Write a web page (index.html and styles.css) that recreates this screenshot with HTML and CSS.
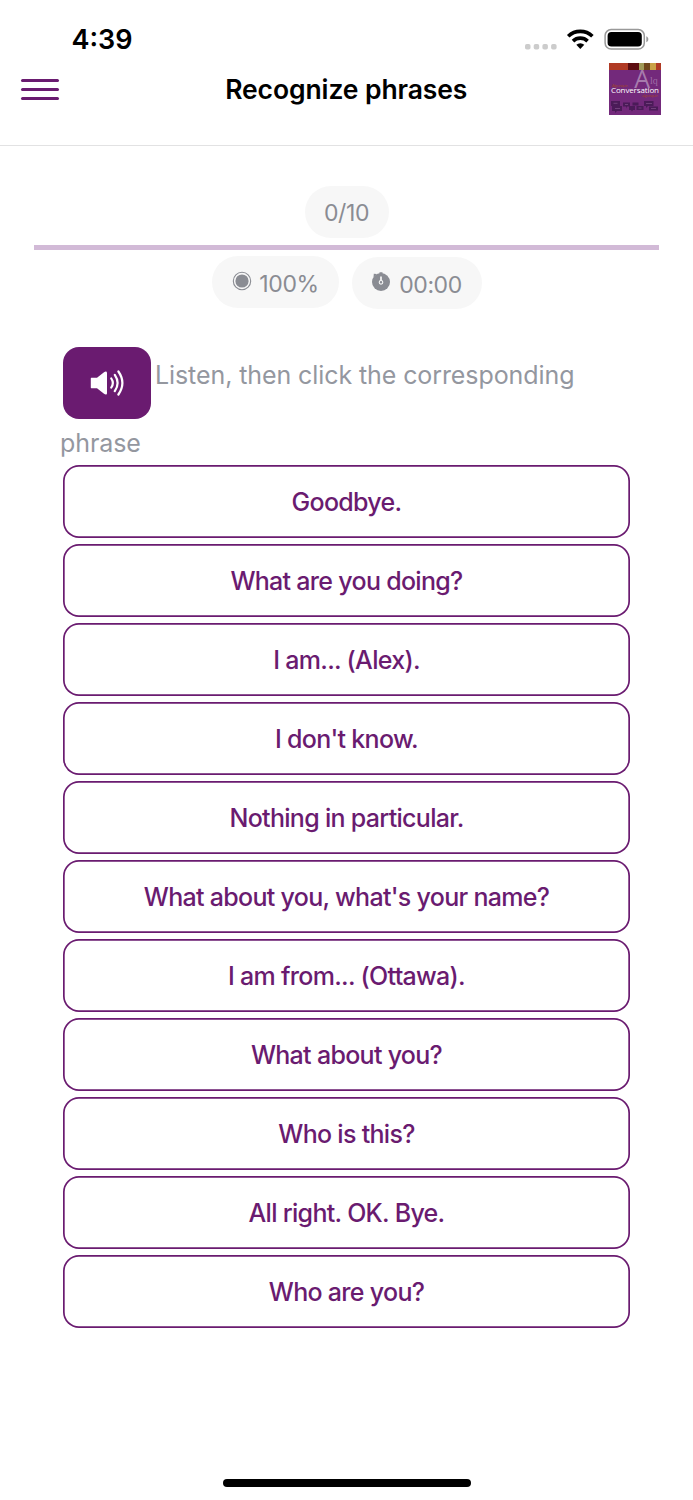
FILE: index.html
```
<!DOCTYPE html>
<html lang="en">
<head>
    <meta charset="utf-8">
    <title>Recognize phrases</title>
    <link rel="stylesheet" href="styles.css">
</head>
<body>
    <header>
        <div class="status-bar">
            <span class="clock">4:39</span>
            <svg class="status-icons" width="126" height="24" viewBox="0 0 126 24">
                <g fill="#ccc">
                    <rect x="0" y="16" width="5.5" height="5.5" rx="1.8"/>
                    <rect x="8.7" y="16" width="5.5" height="5.5" rx="1.8"/>
                    <rect x="17.4" y="16" width="5.5" height="5.5" rx="1.8"/>
                    <rect x="26.1" y="16" width="5.5" height="5.5" rx="1.8"/>
                </g>
                <g fill="none" stroke="#000" stroke-width="3.6">
                    <path d="M43.2 8.3a17.3 17.3 0 0 1 24.2 0"/>
                    <path d="M48 13.1a10.5 10.5 0 0 1 14.6 0"/>
                </g>
                <path d="M51.3 16.7a6 6 0 0 1 8 0l-4 4.2z"/>
                <rect x="80.1" y="1.6" width="39.2" height="19.4" rx="6" fill="none" stroke="#999" stroke-width="1.5"/>
                <rect x="82.6" y="4.1" width="34.2" height="14.4" rx="3.8"/>
                <path d="M121.3 8.3c2.7 1 2.7 5 0 6z" fill="#999"/>
            </svg>
        </div>
        <div class="nav-bar">
            <button class="menu" aria-label="Menu">
                <span></span>
                <span></span>
                <span></span>
            </button>
            <h1>Recognize phrases</h1>
            <svg class="logo" width="52" height="52" viewBox="0 0 52 52">
                <rect width="52" height="52" fill="#73297b"/>
                <rect width="19" height="7" fill="#b03a24"/>
                <rect x="19" width="11" height="7" fill="#5c0d10"/>
                <rect x="30" width="5" height="7" fill="#a09a58"/>
                <rect x="35" width="6" height="7" fill="#70461c"/>
                <rect x="41" width="6" height="7" fill="#c9a146"/>
                <rect x="47" width="5" height="7" fill="#b03a24"/>
                <text x="25.3" y="24.5" class="logo-letter">A</text>
                <text x="41" y="20.5" class="logo-lang">lq</text>
                <text x="3" y="23.5" class="logo-small" textLength="16">Algonquin</text>
                <text x="33" y="34" class="logo-small" textLength="16">algonquin</text>
                <g fill="#4b1b58">
                    <path d="M2 38h9v5h2v5H8l-2 2v-2H3v-5H2z"/>
                    <path d="M14 39.5h7v4h-3l-1 2v-2h-3z"/>
                    <path d="M20 43h6v4h-2l-1 1.5L22 47h-2z"/>
                    <path d="M23.5 39.5h6v3h-6zM27.5 43h7v4h-7z"/>
                    <path d="M35 38h9.5v5H39l-2 2v-2h-2z"/>
                    <path d="M40 43.5h9v4h-9z"/>
                </g>
                <path d="M4.5 40.3h4M6 45.5h5M16 41.5h3M37 40.5h6M29.5 45h3M42 45.5h5" stroke="#8c5b94" stroke-width=".6"/>
                <text x="2" y="29.8" class="logo-name" textLength="48">Conversation</text>
            </svg>
        </div>
    </header>

    <main>
        <section class="stats">
            <div class="pill count"><span>0/10</span></div>
            <div class="progress"></div>
            <div class="pills">
                <div class="pill score">
                    <svg width="20" height="20" viewBox="0 0 20 20">
                        <circle cx="10" cy="10" r="8.7" fill="none" stroke="#8a8c93" stroke-width="1.1"/>
                        <circle cx="10" cy="10" r="6.6" fill="#8a8c93"/>
                    </svg>
                    <span>100%</span>
                </div>
                <div class="pill time">
                    <svg width="20" height="20" viewBox="0 0 20 20">
                        <circle cx="10" cy="11" r="9" fill="#8a8c93"/>
                        <path d="M8.5 3V1.2h3V3zM2.5 6.5L2.8 2.8 6 3z" fill="#8a8c93"/>
                        <path d="M10 5.5v5" stroke="#f7f7f7" stroke-width="1.7"/>
                        <circle cx="10" cy="11.3" r="1.8" fill="#8a8c93" stroke="#f7f7f7" stroke-width="1.1"/>
                    </svg>
                    <span>00:00</span>
                </div>
            </div>
        </section>

        <section class="quiz">
            <p class="question">
                <button class="listen" aria-label="Listen">
                    <svg width="34" height="28" viewBox="0 0 34 28">
                        <path d="M1.8 8.7H7L14 3.2c1.7-1.3 3-.9 3 .8v20c0 1.7-1.3 2.1-3 .8L7 19.3H1.8C1 19.3.8 19 .8 18.3V9.7c0-.7.2-1 1-1z" fill="#fff"/>
                        <path d="M21.3 9.5q3.1 4.5 0 9M24.8 5.9q5.6 8.1 0 16.2M28.4 2.5q8 11.5 0 23" fill="none" stroke="#fff" stroke-width="2.2" stroke-linecap="round"/>
                    </svg>
                </button><span class="question-text">Listen, then click the corresponding phrase</span>
            </p>
            <div class="answers">
                <button>Goodbye.</button>
                <button>What are you doing?</button>
                <button>I am... (Alex).</button>
                <button>I don't know.</button>
                <button>Nothing in particular.</button>
                <button>What about you, what's your name?</button>
                <button>I am from... (Ottawa).</button>
                <button>What about you?</button>
                <button>Who is this?</button>
                <button>All right. OK. Bye.</button>
                <button>Who are you?</button>
            </div>
        </section>
    </main>
    <footer>
        <div class="home-indicator"></div>
    </footer>
</body>
</html>
```
FILE: styles.css
```
* {
    box-sizing: border-box;
}
body {
    display: flex;
    flex-direction: column;
    height: 1500px;
    margin: 0;
    font-family: Inter, "Liberation Sans", sans-serif;
    background-color: #fff;
    color: #000;
}
button {
    font-family: inherit;
    border: none;
    padding: 0;
    cursor: pointer;
}
svg {
    display: block;
}
header {
    height: 146px;
    border-bottom: 1px solid #e2e2e3;
}
.status-bar {
    display: flex;
    justify-content: space-between;
    height: 63px;
    padding: 22px 42px 0 71.5px;
}
.clock {
    font-size: 27px;
    font-weight: 600;
    line-height: 36px;
}
.status-icons {
    margin-top: 6px;
}
.nav-bar {
    display: grid;
    grid-template-columns: 52px 1fr 52px;
    align-items: center;
    height: 53px;
    padding: 0 32.5px 0 21px;
}
.menu {
    display: flex;
    flex-direction: column;
    gap: 6.4px;
    background: none;
}
.menu span {
    width: 38px;
    height: 3px;
    border-radius: 2px;
    background-color: #6a1b70;
}
h1 {
    margin: 0 0 2px 11px;
    font-size: 26.5px;
    font-weight: 600;
    letter-spacing: -0.1px;
    text-align: center;
}
.logo {
    margin-top: -1px;
}
.logo-letter {
    font: 25px "Open Sans", sans-serif;
    fill: #a77bad;
}
.logo-lang {
    font: 10px "Liberation Serif", serif;
    fill: #a06ca7;
}
.logo-small {
    font: 4px "Open Sans", sans-serif;
    fill: #a0452d;
}
.logo-name {
    font: 8px "Open Sans", sans-serif;
    fill: #fff;
}
.stats {
    display: flex;
    flex-direction: column;
    align-items: center;
    padding: 40px 34px 0;
}
.pill {
    display: flex;
    justify-content: center;
    height: 52px;
    border-radius: 26px;
    background-color: #f7f7f7;
    color: #8a8c93;
    font-size: 23px;
    letter-spacing: -0.4px;
    line-height: 54px;
}
.count {
    width: 84px;
}
.progress {
    width: 100%;
    height: 5px;
    margin-top: 7px;
    background-color: #d2bad7;
}
.pills {
    display: flex;
    gap: 13px;
    margin-top: 6px;
}
.score {
    gap: 7px;
    width: 127px;
    padding-left: 1px;
}
.score svg {
    margin-top: 15px;
}
.time {
    gap: 8px;
    width: 130px;
    margin-top: 1px;
}
.time svg {
    margin-top: 14px;
}
.pills .pill {
    line-height: 56px;
}
.quiz {
    padding: 38px 63px 0;
}
.question {
    margin: 0 0 0 -3px;
    color: #94979f;
    font-size: 25px;
    letter-spacing: -0.09px;
    line-height: 36px;
}
.listen {
    display: inline-flex;
    align-items: center;
    justify-content: center;
    width: 88px;
    height: 72px;
    margin: 0 4px 6px 3px;
    border-radius: 16px;
    background-color: #6a1b70;
    vertical-align: -13px;
}
.answers {
    display: grid;
    grid-auto-rows: 72.5px;
    gap: 6.55px;
    margin-top: 4px;
}
.answers button {
    padding-top: 1px;
    border-radius: 16px;
    box-shadow: inset 0 0 0 1.7px #6a1b70;
    background-color: #fff;
    color: #6a1b70;
    font-size: 25px;
    font-weight: 500;
    letter-spacing: -0.7px;
}
footer {
    display: flex;
    justify-content: center;
    margin-top: auto;
    padding-bottom: 13px;
}
.home-indicator {
    width: 248px;
    height: 8px;
    border-radius: 4px;
    background-color: #000;
}
```
